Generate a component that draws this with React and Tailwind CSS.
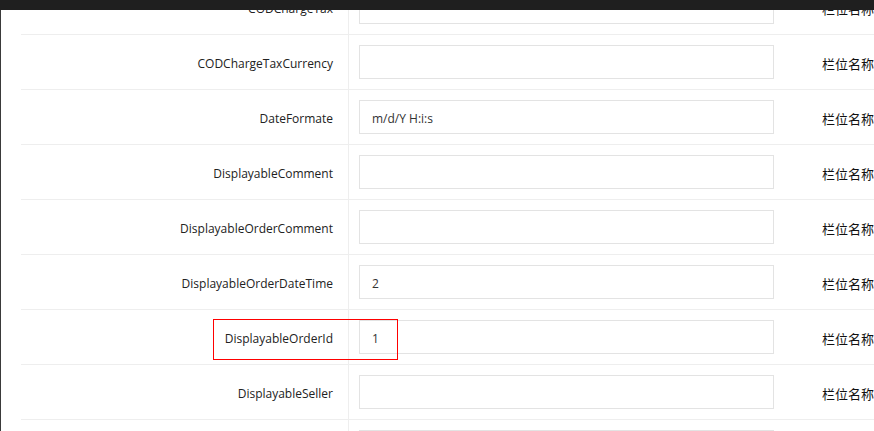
import React from "react";

const rows = [
  { label: "CODChargeTax", value: "" },
  { label: "CODChargeTaxCurrency", value: "" },
  { label: "DateFormate", value: "m/d/Y H:i:s" },
  { label: "DisplayableComment", value: "" },
  { label: "DisplayableOrderComment", value: "" },
  { label: "DisplayableOrderDateTime", value: "2" },
  { label: "DisplayableOrderId", value: "1", highlight: true },
  { label: "DisplayableSeller", value: "" },
  { label: "DisplayableSellerId", value: "" },
];

function Highlight() {
  return (
    <div className="absolute left-[192px] top-[9px] w-[185px] h-[41px] border border-[#ff0000] text-[#ff0000] pointer-events-none" />
  );
}

export default function App() {
  return (
    <div
      className="w-[874px] h-[431px] overflow-hidden bg-white flex flex-col"
      style={{ fontFamily: '"Open Sans", "Noto Sans CJK SC", sans-serif' }}
    >
      <div className="h-[10px] shrink-0 bg-[#1f1f1f]" />
      <div className="flex flex-1 overflow-hidden">
        <div className="w-[1px] shrink-0 bg-[#3a3a3a]" />
        <div className="flex-1 pl-[20px] overflow-hidden">
          <div className="-mt-[30px]">
            {rows.map((r, i) => (
              <div
                key={i}
                className="relative flex h-[55px] border-b border-[#eeeeee] text-[12px] text-[#222]"
              >
                <div className="w-[328px] shrink-0 border-r border-[#eeeeee] pr-[15px] pt-[4px] flex items-center justify-end">
                  {r.label}
                </div>
                <div className="pl-[10px] flex items-center">
                  <div className="w-[415px] h-[34px] border border-[#e3e3e3] px-[12px] pt-[3px] flex items-center text-[#333]">
                    {r.value}
                  </div>
                </div>
                <div
                  className="ml-[48px] pt-[3px] flex items-center whitespace-nowrap text-[13px] text-[#111]"
                  style={{ fontFamily: '"Noto Sans CJK SC", sans-serif' }}
                >
                  栏位名称
                </div>
                {r.highlight ? <Highlight /> : null}
              </div>
            ))}
          </div>
        </div>
      </div>
    </div>
  );
}
